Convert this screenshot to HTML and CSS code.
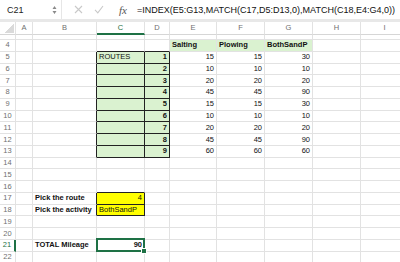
FILE: index.html
```html
<!DOCTYPE html>
<html lang="en">

<head>
  <meta charset="UTF-8" />
  <title>Routes</title>
  <link rel="stylesheet" href="styles.css">
</head>

<body>
  <!-- Formula bar -->
  <div class="formula-bar">
    <div class="name-box">
      <span>C21</span>
      <svg class="stepper" width="5" height="10" viewBox="0 0 5 10">
        <path d="M0.5 4 L2.5 1 L4.5 4 Z M0.5 6 L2.5 9 L4.5 6 Z" fill="#8a8a8a" />
      </svg>
    </div>
    <div class="bar-icons">
      <svg width="9" height="9" viewBox="0 0 9 9">
        <path d="M1 1 L8 8 M8 1 L1 8" stroke="#c9c9c9" stroke-width="1.1" fill="none" />
      </svg>
      <svg width="10" height="9" viewBox="0 0 10 9">
        <path d="M1 4.8 L3.8 7.8 L9 1" stroke="#c9c9c9" stroke-width="1.1" fill="none" />
      </svg>
      <span class="fx">fx</span>
    </div>
    <div class="formula">=INDEX(E5:G13,MATCH(C17,D5:D13,0),MATCH(C18,E4:G4,0))</div>
  </div>
  <div class="band"></div>

  <!-- Sheet -->
  <table class="sheet">
    <colgroup>
      <col style="width:16px"><col style="width:17px"><col style="width:64px"><col style="width:48px"><col style="width:25px">
      <col style="width:47px"><col style="width:48px"><col style="width:48px"><col style="width:48px"><col style="width:48px">
    </colgroup>
    <tr class="head">
      <th class="corner"></th><th>A</th><th>B</th><th class="sel-col">C</th><th>D</th><th>E</th><th>F</th><th>G</th><th>H</th><th>I</th>
    </tr>
    <tr class="sliver">
      <th class="rn"></th><td></td><td></td><td></td><td></td><td></td><td></td><td></td><td></td><td></td>
    </tr>
    <tr>
      <th class="rn">4</th><td></td><td></td><td class="bb"></td><td class="bb"></td>
      <td class="green b">Salting</td><td class="green b">Plowing</td><td class="green b">BothSandP</td><td></td><td></td>
    </tr>
    <tr>
      <th class="rn">5</th><td></td><td class="br"></td><td class="green bx">ROUTES</td><td class="green bx b num">1</td>
      <td class="num">15</td><td class="num">15</td><td class="num">30</td><td></td><td></td>
    </tr>
    <tr>
      <th class="rn">6</th><td></td><td class="br"></td><td class="green bx"></td><td class="green bx b num">2</td>
      <td class="num">10</td><td class="num">10</td><td class="num">10</td><td></td><td></td>
    </tr>
    <tr>
      <th class="rn">7</th><td></td><td class="br"></td><td class="green bx"></td><td class="green bx b num">3</td>
      <td class="num">20</td><td class="num">20</td><td class="num">20</td><td></td><td></td>
    </tr>
    <tr>
      <th class="rn">8</th><td></td><td class="br"></td><td class="green bx"></td><td class="green bx b num">4</td>
      <td class="num">45</td><td class="num">45</td><td class="num">90</td><td></td><td></td>
    </tr>
    <tr>
      <th class="rn">9</th><td></td><td class="br"></td><td class="green bx"></td><td class="green bx b num">5</td>
      <td class="num">15</td><td class="num">15</td><td class="num">30</td><td></td><td></td>
    </tr>
    <tr>
      <th class="rn">10</th><td></td><td class="br"></td><td class="green bx"></td><td class="green bx b num">6</td>
      <td class="num">10</td><td class="num">10</td><td class="num">10</td><td></td><td></td>
    </tr>
    <tr>
      <th class="rn">11</th><td></td><td class="br"></td><td class="green bx"></td><td class="green bx b num">7</td>
      <td class="num">20</td><td class="num">20</td><td class="num">20</td><td></td><td></td>
    </tr>
    <tr>
      <th class="rn">12</th><td></td><td class="br"></td><td class="green bx"></td><td class="green bx b num">8</td>
      <td class="num">45</td><td class="num">45</td><td class="num">90</td><td></td><td></td>
    </tr>
    <tr>
      <th class="rn">13</th><td></td><td class="br"></td><td class="green bx"></td><td class="green bx b num">9</td>
      <td class="num">60</td><td class="num">60</td><td class="num">60</td><td></td><td></td>
    </tr>
    <tr>
      <th class="rn">14</th><td></td><td></td><td></td><td></td><td></td><td></td><td></td><td></td><td></td>
    </tr>
    <tr>
      <th class="rn">15</th><td></td><td></td><td></td><td></td><td></td><td></td><td></td><td></td><td></td>
    </tr>
    <tr>
      <th class="rn">16</th><td></td><td></td><td class="bb"></td><td></td><td></td><td></td><td></td><td></td><td></td>
    </tr>
    <tr>
      <th class="rn">17</th><td></td><td class="br b">Pick the route</td><td class="yellow bx num">4</td><td></td>
      <td></td><td></td><td></td><td></td><td></td>
    </tr>
    <tr>
      <th class="rn">18</th><td></td><td class="br b">Pick the activity</td><td class="yellow bx">BothSandP</td><td></td>
      <td></td><td></td><td></td><td></td><td></td>
    </tr>
    <tr>
      <th class="rn">19</th><td></td><td></td><td></td><td></td><td></td><td></td><td></td><td></td><td></td>
    </tr>
    <tr>
      <th class="rn">20</th><td></td><td></td><td></td><td></td><td></td><td></td><td></td><td></td><td></td>
    </tr>
    <tr>
      <th class="rn sel-row">21</th><td></td><td class="b">TOTAL Mileage</td><td class="b num active">90</td><td></td>
      <td></td><td></td><td></td><td></td><td></td>
    </tr>
    <tr>
      <th class="rn">22</th><td></td><td></td><td></td><td></td><td></td><td></td><td></td><td></td><td></td>
    </tr>
  </table>
</body>

</html>
```

FILE: styles.css
```css
/* General */
body {
  margin: 0;
  font-family: "Liberation Sans", Arial, sans-serif;
  background-color: #fff;
  color: #111;
  overflow: hidden;
}

/* Formula bar */
.formula-bar {
  display: flex;
  align-items: center;
  height: 19px;
}

.name-box {
  width: 62px;
  height: 100%;
  box-sizing: border-box;
  display: flex;
  align-items: center;
  justify-content: space-between;
  padding: 0 4px 0 7px;
  font-size: 9px;
  color: #222;
  border-right: 1px solid #e6e6e6;
}

.bar-icons {
  display: flex;
  align-items: center;
  gap: 11px;
  padding-left: 12px;
}

.fx {
  font-family: "Liberation Serif", serif;
  font-style: italic;
  font-size: 11px;
  color: #555;
  margin-left: 4px;
}

.formula {
  padding-left: 10px;
  font-size: 9px;
  white-space: nowrap;
  color: #111;
}

.band {
  height: 3px;
  background-color: #e8e8e8;
}

/* Sheet grid */
.sheet {
  table-layout: fixed;
  border-collapse: separate;
  border-spacing: 0;
  width: 409px;
  font-size: 7.5px;
}

.sheet td,
.sheet th {
  box-sizing: border-box;
  height: 11.78px;
  padding: 0 2px;
  line-height: 10px;
  border-right: 1px solid #e2e2e2;
  border-bottom: 1px solid #e2e2e2;
  white-space: nowrap;
  overflow: hidden;
  text-align: left;
}

.sheet th {
  font-weight: normal;
  color: #707070;
  text-align: center;
}

.head th {
  height: 13px;
  border-bottom-color: #d6d6d6;
}

.sliver td,
.sliver th {
  height: 5px;
}

.corner {
  background: linear-gradient(to top left, #dadada 50%, transparent 50%) right 1px bottom 1px / 10px 9px no-repeat;
}

.sel-col {
  color: #1e7145 !important;
  border-bottom: 2px solid #1e7145 !important;
}

.sel-row {
  color: #1e7145 !important;
  border-right: 2px solid #1e7145 !important;
}

/* Cell styles */
.b {
  font-weight: bold;
}

.num {
  text-align: right !important;
}

.green {
  background-color: #daf2d0;
}

.yellow {
  background-color: #ffff00;
}

.bx {
  border-right-color: #222 !important;
  border-bottom-color: #222 !important;
}

.bb {
  border-bottom-color: #222 !important;
}

.br {
  border-right-color: #222 !important;
}

/* Active cell */
.active {
  position: relative;
  overflow: visible !important;
}

.active::after {
  content: "";
  position: absolute;
  top: -2px;
  left: -1px;
  right: -1px;
  bottom: -1px;
  border: 2px solid #1e7145;
}

.active::before {
  content: "";
  position: absolute;
  right: -3px;
  bottom: -3px;
  width: 4px;
  height: 4px;
  background-color: #1e7145;
  border: 1px solid #fff;
  z-index: 1;
}
```
